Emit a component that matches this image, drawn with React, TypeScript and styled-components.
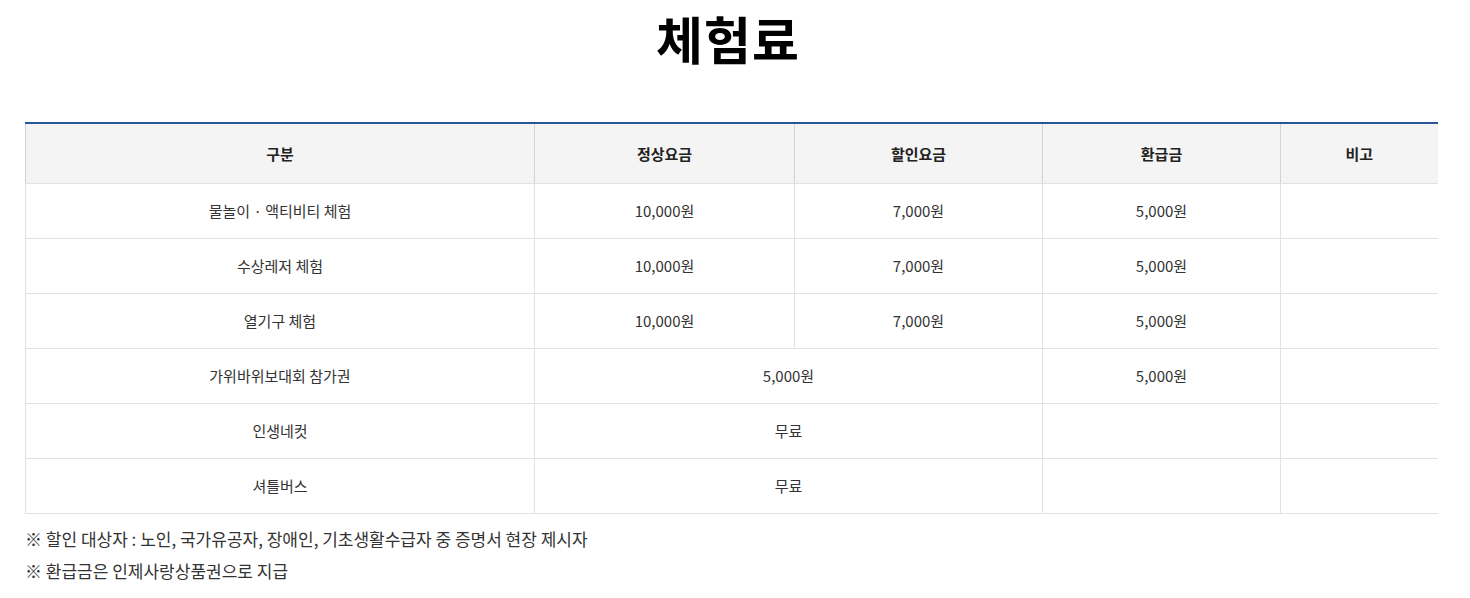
import styled, { createGlobalStyle } from "styled-components";

const GlobalStyle = createGlobalStyle`
  body {
    margin: 0;
    background: #fff;
    font-family: "Noto Sans CJK KR", "Noto Sans", sans-serif;
    color: #333;
  }
`

const rows = [
  { name: "물놀이 · 액티비티 체험", normal: "10,000원", sale: "7,000원", refund: "5,000원" },
  { name: "수상레저 체험", normal: "10,000원", sale: "7,000원", refund: "5,000원" },
  { name: "열기구 체험", normal: "10,000원", sale: "7,000원", refund: "5,000원" },
  { name: "가위바위보대회 참가권", price: "5,000원", refund: "5,000원" },
  { name: "인생네컷", price: "무료", refund: "" },
  { name: "셔틀버스", price: "무료", refund: "" },
]

function App() {
  return (
    <>
      <GlobalStyle />
      <Page>
        <Title>체험료</Title>
        <FeeTable>
          <colgroup>
            <col style={{ width: 509 }} />
            <col style={{ width: 260 }} />
            <col style={{ width: 248 }} />
            <col style={{ width: 238 }} />
            <col style={{ width: 157 }} />
          </colgroup>
          <thead>
            <tr>
              <Th>구분</Th>
              <Th>정상요금</Th>
              <Th>할인요금</Th>
              <Th>환급금</Th>
              <Th>비고</Th>
            </tr>
          </thead>
          <tbody>
            {rows.map((r) => (
              <tr key={r.name}>
                <Td>{r.name}</Td>
                {r.price ? (
                  <Td colSpan={2}>{r.price}</Td>
                ) : (
                  <>
                    <Td>{r.normal}</Td>
                    <Td>{r.sale}</Td>
                  </>
                )}
                <Td>{r.refund}</Td>
                <Td></Td>
              </tr>
            ))}
          </tbody>
        </FeeTable>
        <Notes>
          <li>※ 할인 대상자 : 노인, 국가유공자, 장애인, 기초생활수급자 중 증명서 현장 제시자</li>
          <li>※ 환급금은 인제사랑상품권으로 지급</li>
        </Notes>
      </Page>
    </>
  )
}

export default App;


const Page = styled.div`
  width: 1412px;
  padding: 0 0 0 25px;
`

const Title = styled.h2`
  margin: 0;
  padding: 4px 6px 0 0;
  height: 118px;
  text-align: center;
  font-size: 51px;
  font-weight: 700;
  line-height: 68px;
  color: #000;
  letter-spacing: 1px;
`

const FeeTable = styled.table`
  width: 1412px;
  table-layout: fixed;
  border-collapse: collapse;
  border-top: 2px solid #2a5599;
`

const Th = styled.th`
  height: 59px;
  padding: 0;
  background-color: #f4f4f4;
  border-left: 1px solid #d3d3d3;
  border-bottom: 1px solid #e2e2e2;
  font-size: 15px;
  font-weight: 700;
  color: #222;
  text-align: center;
  vertical-align: middle;
`

const Td = styled.td`
  height: 52px;
  padding: 0 0 2px;
  border-left: 1px solid #e2e2e2;
  border-bottom: 1px solid #e2e2e2;
  font-size: 15px;
  color: #333;
  text-align: center;
  vertical-align: middle;
`

const Notes = styled.ul`
  list-style: none;
  margin: 9px 0 0;
  padding: 0;
  li {
    font-size: 17px;
    line-height: 32px;
    color: #333;
  }
`
